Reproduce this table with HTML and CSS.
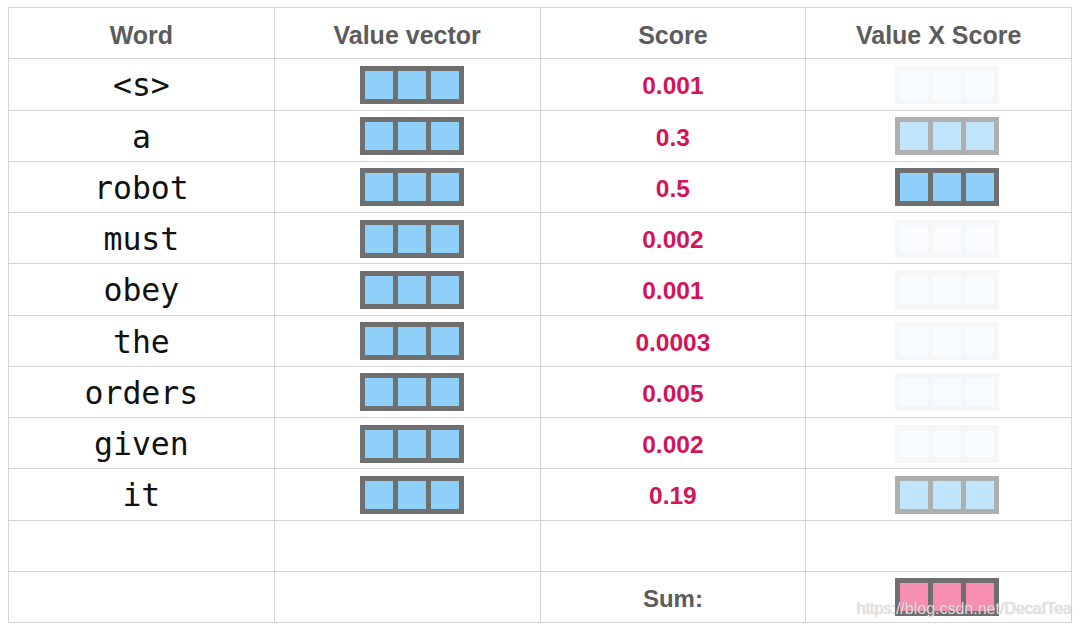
FILE: index.html
```html
<!DOCTYPE html>
<html>
<head>
<meta charset="utf-8">
<link rel="stylesheet" href="styles.css">
</head>
<body>
<div class="table">
  <div class="cell head">Word</div>
  <div class="cell head">Value vector</div>
  <div class="cell head">Score</div>
  <div class="cell head">Value X Score</div>

  <div class="cell word">&lt;s&gt;</div>
  <div class="cell"><div class="vec"><i></i><i></i><i></i></div></div>
  <div class="cell score">0.001</div>
  <div class="cell"><div class="vec wx w-faint"><i></i><i></i><i></i></div></div>

  <div class="cell word">a</div>
  <div class="cell"><div class="vec"><i></i><i></i><i></i></div></div>
  <div class="cell score">0.3</div>
  <div class="cell"><div class="vec wx w-mid"><i></i><i></i><i></i></div></div>

  <div class="cell word">robot</div>
  <div class="cell"><div class="vec"><i></i><i></i><i></i></div></div>
  <div class="cell score">0.5</div>
  <div class="cell"><div class="vec wx"><i></i><i></i><i></i></div></div>

  <div class="cell word">must</div>
  <div class="cell"><div class="vec"><i></i><i></i><i></i></div></div>
  <div class="cell score">0.002</div>
  <div class="cell"><div class="vec wx w-faint"><i></i><i></i><i></i></div></div>

  <div class="cell word">obey</div>
  <div class="cell"><div class="vec"><i></i><i></i><i></i></div></div>
  <div class="cell score">0.001</div>
  <div class="cell"><div class="vec wx w-faint"><i></i><i></i><i></i></div></div>

  <div class="cell word">the</div>
  <div class="cell"><div class="vec"><i></i><i></i><i></i></div></div>
  <div class="cell score">0.0003</div>
  <div class="cell"><div class="vec wx w-faint"><i></i><i></i><i></i></div></div>

  <div class="cell word">orders</div>
  <div class="cell"><div class="vec"><i></i><i></i><i></i></div></div>
  <div class="cell score">0.005</div>
  <div class="cell"><div class="vec wx w-faint"><i></i><i></i><i></i></div></div>

  <div class="cell word">given</div>
  <div class="cell"><div class="vec"><i></i><i></i><i></i></div></div>
  <div class="cell score">0.002</div>
  <div class="cell"><div class="vec wx w-faint"><i></i><i></i><i></i></div></div>

  <div class="cell word">it</div>
  <div class="cell"><div class="vec"><i></i><i></i><i></i></div></div>
  <div class="cell score">0.19</div>
  <div class="cell"><div class="vec wx w-mid"><i></i><i></i><i></i></div></div>

  <div class="cell"></div>
  <div class="cell"></div>
  <div class="cell"></div>
  <div class="cell"></div>

  <div class="cell"></div>
  <div class="cell"></div>
  <div class="cell sum">Sum:</div>
  <div class="cell"><div class="vec wx pink"><i></i><i></i><i></i></div></div>
  <div class="watermark">https://blog.csdn.net/DecafTea</div>
</div>
</body>
</html>
```
FILE: styles.css
```css
html, body {
  margin: 0;
  padding: 0;
  background: #ffffff;
}
body {
  padding: 7px 8px 0 8px;
}
.table {
  position: relative;
  width: 1064px;
  height: 616px;
  box-sizing: border-box;
  display: grid;
  grid-template-columns: repeat(4, 1fr);
  grid-template-rows: repeat(12, 1fr);
  border-top: 1.5px solid #d4d4d4;
  border-left: 1.5px solid #d4d4d4;
}
.cell {
  display: flex;
  align-items: center;
  justify-content: center;
  border-right: 1.5px solid #d4d4d4;
  border-bottom: 1.5px solid #d4d4d4;
  min-width: 0;
}
.head {
  font-family: "Liberation Sans", Arial, sans-serif;
  font-weight: bold;
  font-size: 25px;
  color: #5c5c5c;
  padding-top: 5px;
}
.word {
  font-family: "DejaVu Sans Mono", monospace;
  font-size: 31.5px;
  color: #111111;
  padding-top: 2px;
}
.score {
  font-family: "Liberation Sans", Arial, sans-serif;
  font-weight: bold;
  font-size: 24.5px;
  color: #d4145a;
  padding-top: 4px;
}
.sum {
  font-family: "Liberation Sans", Arial, sans-serif;
  font-weight: bold;
  font-size: 24px;
  color: #5c5c5c;
  padding-top: 4px;
}
.vec {
  display: flex;
  gap: 5px;
  padding: 5px;
  background: #6f6f6f;
  margin-left: 10px;
  margin-top: 1px;
}
.vec.wx {
  margin-left: 16px;
}
.vec i {
  display: block;
  width: 28px;
  height: 28px;
  background: #8fd0fb;
}
.vec.w-faint {
  opacity: 0.06;
}
.vec.w-mid {
  opacity: 0.55;
}
.vec.pink i {
  background: #f78fb3;
}
.watermark {
  position: absolute;
  right: 0;
  bottom: 5px;
  font-family: "Liberation Sans", Arial, sans-serif;
  font-size: 16px;
  color: rgba(235, 235, 235, 0.9);
  text-shadow: 0 0 1px rgba(120, 120, 120, 0.6);
}
```
